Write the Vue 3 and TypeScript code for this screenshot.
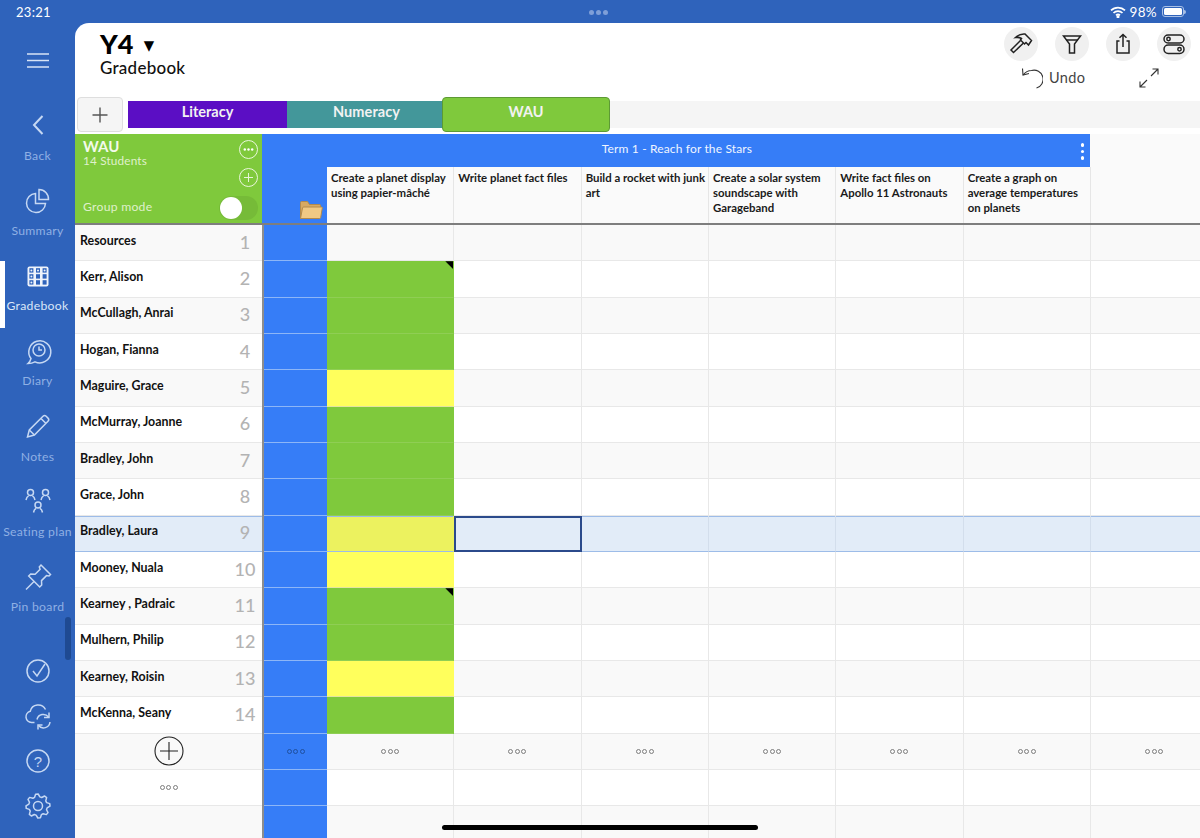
<script setup lang="ts">
type Student = { name: string; colour: '' | 'g' | 'y'; mark?: boolean }

const students: Student[] = [
  { name: 'Resources', colour: '' },
  { name: 'Kerr, Alison', colour: 'g', mark: true },
  { name: 'McCullagh, Anrai', colour: 'g' },
  { name: 'Hogan, Fianna', colour: 'g' },
  { name: 'Maguire, Grace', colour: 'y' },
  { name: 'McMurray, Joanne', colour: 'g' },
  { name: 'Bradley, John', colour: 'g' },
  { name: 'Grace, John', colour: 'g' },
  { name: 'Bradley, Laura', colour: 'y' },
  { name: 'Mooney, Nuala', colour: 'y' },
  { name: 'Kearney , Padraic', colour: 'g', mark: true },
  { name: 'Mulhern, Philip', colour: 'g' },
  { name: 'Kearney, Roisin', colour: 'y' },
  { name: 'McKenna, Seany', colour: 'g' },
]
const selectedIndex = 8
const columns = [
  'Create a planet display using papier-mâché',
  'Write planet fact files',
  'Build a rocket with junk art',
  'Create a solar system soundscape with Garageband',
  'Write fact files on Apollo 11 Astronauts',
  'Create a graph on average temperatures on planets',
]
const cellCols = [0, 1, 2, 3, 4, 5, 6]

const gearPath = (() => {
  const cx = 15, cy = 15, n = 8
  const pts: string[] = []
  for (let i = 0; i < n; i++) {
    const a = (i / n) * Math.PI * 2
    const step = (Math.PI * 2) / n
    const offs: [number, number][] = [
      [-0.5, 9.3], [-0.27, 12], [0.02, 12], [0.27, 9.3],
    ]
    for (const [o, r] of offs) {
      const t = a + o * step * 0.95
      pts.push(`${(cx + r * Math.cos(t)).toFixed(2)} ${(cy + r * Math.sin(t)).toFixed(2)}`)
    }
  }
  return 'M' + pts.join('L') + 'Z'
})()

const gridSquares: { x: number; y: number; dot: boolean }[] = []
for (let r = 0; r < 3; r++) {
  for (let c = 0; c < 3; c++) {
    gridSquares.push({ x: 6.4 + c * 6.6, y: 7.2 + r * 6, dot: r === 0 || c === 0 })
  }
}
</script>

<template>
  <div class="page">
    <div class="status">
      <span class="time">23:21</span>
      <span class="dots"><i></i><i></i><i></i></span>
      <span class="status-right">
        <svg width="16" height="12" viewBox="0 0 16 12" fill="none" stroke="#fff" stroke-width="1.7">
          <path d="M1 4.4a10 10 0 0 1 14 0" /><path d="M3.5 7a6.4 6.4 0 0 1 9 0" /><path d="M6 9.4a3 3 0 0 1 4 0" />
          <circle cx="8" cy="10.8" r=".7" fill="#fff" />
        </svg>
        <span class="pct">98%</span>
        <span class="battery"><b></b></span>
      </span>
    </div>

    <div class="shell">
      <nav class="sidebar">
        <div class="burger">
          <svg width="22" height="15" viewBox="0 0 22 15" stroke="#d8e4f6" stroke-width="1.5"><path d="M0 1h22M0 7.5h22M0 14h22" /></svg>
        </div>

        <div class="nav-item">
          <svg class="ico" viewBox="0 0 30 30"><path d="M19.5 6 11 15l8.5 9" stroke-width="2" /></svg>
          <span>Back</span>
        </div>
        <div class="nav-item">
          <svg class="ico" viewBox="0 0 30 30"><path d="M12.5 8.5a9.5 9.5 0 1 0 10 10h-10z" /><path d="M16 4.5a9.5 9.5 0 0 1 9.5 10H16z" /></svg>
          <span>Summary</span>
        </div>
        <div class="nav-item active">
          <i class="strip"></i>
          <svg class="ico" viewBox="0 0 30 30">
            <rect x="4.500" y="5.500" width="21" height="20" rx="2" fill="#eef3fb" stroke="none" />
            <g v-for="(s, i) in gridSquares" :key="i">
              <rect :x="s.x" :y="s.y" width="4" height="4.400" fill="#2f63bb" stroke="none" />
              <circle v-if="s.dot" :cx="s.x + 2" :cy="s.y + 2.2" r="1" fill="#eef3fb" stroke="none" />
            </g>
          </svg>
          <span>Gradebook</span>
        </div>
        <div class="nav-item">
          <svg class="ico" viewBox="0 0 30 30">
            <path d="M8 22.500a11 11 0 1 1 4 3.300q-3 1.700-7 1.700 2.300-2 3-5z" />
            <circle cx="16" cy="14" r="6" /><path d="M16 10.500V14h3" />
          </svg>
          <span>Diary</span>
        </div>
        <div class="nav-item">
          <svg class="ico" viewBox="0 0 30 30">
            <path d="M4.500 26l1.800-7L20 5.300a2.300 2.300 0 0 1 3.200 0l1.800 1.800a2.300 2.300 0 0 1 0 3.200L11.400 24z" />
            <path d="M6.300 19l5.100 5M18 7.500l4.800 4.800" />
          </svg>
          <span>Notes</span>
        </div>
        <div class="nav-item">
          <svg class="ico" viewBox="0 0 30 30" stroke-width="1.900">
            <g v-for="p in [[7.500, 2], [22.500, 2], [15, 14.500]]" :key="p[0]">
              <circle :cx="p[0]" :cy="p[1] + 3.500" r="3" />
              <path :d="`M${p[0] - 4.500} ${p[1] + 11}q.6-3.200 2.600-4.200M${p[0] + 4.500} ${p[1] + 11}q-.6-3.200-2.600-4.200`" />
            </g>
          </svg>
          <span>Seating plan</span>
        </div>
        <div class="nav-item">
          <svg class="ico" viewBox="0 0 30 30">
            <path d="M18 3l9.500 9.500-1.500 1.500-2.500-.4-5 5 .2 4.400-2 2-11-11 2-2 4.400.2 5-5L16.300 5z" />
            <path d="M11 19.500 3 27.500" />
          </svg>
          <span>Pin board</span>
        </div>

        <div class="nav-bottom">
          <div class="nav-btn">
            <svg class="ico" viewBox="0 0 30 30"><circle cx="15" cy="15" r="11" /><path d="M10 15l4 5 8-12" /></svg>
          </div>
          <div class="nav-btn">
            <svg class="ico" viewBox="0 0 30 30" stroke-width="1.700">
              <path d="M11.500 21.500H8.500a5.700 5.700 0 0 1-1.300-11.200A8.200 8.200 0 0 1 22.500 8.500" />
              <path d="M14 18.500a6.500 6.500 0 0 1 11.500-2.500M27 21a6.500 6.500 0 0 1-11.500 3.500" />
              <path d="M26 11.500V16.500H21M15 28.500v-4.500h4.500" />
            </svg>
          </div>
          <div class="nav-btn">
            <svg class="ico" viewBox="0 0 30 30">
              <circle cx="15" cy="15" r="11" />
              <text x="15" y="20.500" text-anchor="middle" class="q">?</text>
            </svg>
          </div>
          <div class="nav-btn">
            <svg class="ico" viewBox="0 0 30 30"><path :d="gearPath" stroke-linejoin="round" /><circle cx="15" cy="15" r="4.500" /></svg>
          </div>
        </div>
        <i class="nav-scroll"></i>
      </nav>

      <main class="main">
        <header class="top">
          <div class="title">
            <div class="class-name">Y4 <span class="caret">▼</span></div>
            <div class="page-name">Gradebook</div>
          </div>
          <div class="tools">
            <div class="tool-row">
              <span class="round">
                <svg width="24" height="24" viewBox="0 0 24 24"><path d="M6.500 5.500Q11 1.500 16 2L22.500 8.500 19.500 13 17 10.500 15.500 12 11.500 8 12.500 6.500Q10 5 6.500 5.500z" /><path d="M11.500 8.500 2 18l2.500 2.500L14.500 11" /></svg>
              </span>
              <span class="round">
                <svg width="24" height="24" viewBox="0 0 24 24"><path d="M3.500 4h17l-6 8v9h-5v-9z" /><path d="M6 8h12" /></svg>
              </span>
              <span class="round">
                <svg width="24" height="24" viewBox="0 0 24 24"><path d="M8.500 9H6v12h12V9h-2.500" /><path d="M12 15V2.500M8.500 5.800 12 2.500l3.500 3.300" /></svg>
              </span>
              <span class="round">
                <svg width="24" height="24" viewBox="0 0 24 24"><rect x="2" y="3" width="20" height="8" rx="4" /><rect x="2" y="13" width="20" height="8.500" rx="4.200" /><circle cx="6.500" cy="7" r="1.700" /><circle cx="17.500" cy="17.200" r="1.700" /></svg>
              </span>
            </div>
            <div class="tool-row2">
              <svg class="undo" width="22" height="22" viewBox="0 0 22 22"><path d="M1.500 1.500 2 8l6-1.500" /><path d="M2 8Q5.500 3.500 10.500 3.500A8.500 8.500 0 0 1 15.500 21" /></svg>
              <span class="undo-label">Undo</span>
              <svg class="expand" width="22" height="22" viewBox="0 0 22 22"><path d="M13 9l7-7M14.500 2H20v5.500M9 13l-7 7M2 14.500V20h5.500" /></svg>
            </div>
          </div>
        </header>

        <div class="tabs">
          <button class="add-tab">
            <svg width="16" height="16" viewBox="0 0 16 16" stroke="#555" stroke-width="1.400"><path d="M8 .5v15M.5 8h15" /></svg>
          </button>
          <div class="tab literacy">Literacy</div>
          <div class="tab numeracy">Numeracy</div>
          <div class="tab wau">WAU</div>
          <div class="tab-rest"></div>
        </div>

        <div class="gap"></div>

        <section class="table">
          <div class="head">
            <div class="class-panel">
              <div class="panel-top">
                <div>
                  <div class="panel-title">WAU</div>
                  <div class="panel-sub">14 Students</div>
                </div>
                <div class="panel-btns">
                  <span class="ring"><svg width="11" height="3" viewBox="0 0 11 3" fill="#fff"><circle cx="1.800" cy="1.500" r="1.200" /><circle cx="5.500" cy="1.500" r="1.200" /><circle cx="9.200" cy="1.500" r="1.200" /></svg></span>
                  <span class="ring"><svg width="9" height="9" viewBox="0 0 9 9" stroke="#e6f4d8"><path d="M4.500 0v9M0 4.500h9" /></svg></span>
                </div>
              </div>
              <div class="panel-bottom">
                <span class="group-label">Group mode</span>
                <span class="toggle"><i></i></span>
              </div>
            </div>
            <div class="term">
              <div class="term-banner">
                <span>Term 1 - Reach for the Stars</span>
                <span class="kebab"><i></i><i></i><i></i></span>
              </div>
              <div class="term-cols">
                <div class="folder-cell">
                  <svg width="24" height="20" viewBox="0 0 24 20"><path d="M1.500 18.500V2.500q0-1 1-1h6l2 3h10q1 0 1 1v2H5z" fill="#d8a962" stroke="#b28a4c" /><path d="M1.500 18.500l2-10.500q.2-1 1.200-1h17.800q1 0 .8 1l-1.600 9.500q-.2 1-1.200 1z" fill="#f0c984" stroke="#b28a4c" /></svg>
                </div>
                <div v-for="c in columns" :key="c" class="col-title">{{ c }}</div>
              </div>
            </div>
            <div class="head-rest"></div>
          </div>

          <div
            v-for="(s, i) in students"
            :key="s.name"
            class="row"
            :class="{ odd: i % 2 === 0, selected: i === selectedIndex }"
          >
            <div class="name-cell">
              <span class="name">{{ s.name }}</span>
              <span class="num">{{ i + 1 }}</span>
            </div>
            <div class="rule"></div>
            <div class="blue-cell"></div>
            <div
              v-for="c in cellCols"
              :key="c"
              class="cell"
              :class="{
                green: c === 0 && s.colour === 'g',
                yellow: c === 0 && s.colour === 'y',
                mark: c === 0 && s.mark,
                current: c === 1 && i === selectedIndex,
              }"
            ></div>
          </div>

          <div class="row">
            <div class="name-cell center odd-bg">
              <svg width="30" height="30" viewBox="0 0 30 30" fill="none" stroke="#222" stroke-width="1.100"><circle cx="15" cy="15" r="14" /><path d="M15 6v18M6 15h18" /></svg>
            </div>
            <div class="rule"></div>
            <div class="blue-cell center"><span class="ooo on-blue"><i></i><i></i><i></i></span></div>
            <div v-for="c in cellCols" :key="c" class="cell center odd-bg"><span class="ooo"><i></i><i></i><i></i></span></div>
          </div>
          <div class="row">
            <div class="name-cell center"><span class="ooo"><i></i><i></i><i></i></span></div>
            <div class="rule"></div>
            <div class="blue-cell"></div>
            <div v-for="c in cellCols" :key="c" class="cell"></div>
          </div>
          <div class="row odd">
            <div class="name-cell"></div>
            <div class="rule"></div>
            <div class="blue-cell"></div>
            <div v-for="c in cellCols" :key="c" class="cell"></div>
          </div>
        </section>
      </main>
    </div>
    <i class="home"></i>
  </div>
</template>

<style>
html, body { margin: 0; background: #2f63bb; }
</style>

<style scoped>
.page {
  position: relative;
  width: 1200px;
  height: 838px;
  overflow: hidden;
  display: flex;
  flex-direction: column;
  background: #2f63bb;
  font-family: Lato, "Open Sans", sans-serif;
  color: #111;
}
.status {
  height: 23px;
  flex: none;
  position: relative;
  display: flex;
  justify-content: space-between;
  align-items: center;
  padding: 0 16px;
  color: #fff;
  font-size: 13px;
  letter-spacing: .3px;
}
.dots { display: flex; gap: 2px; position: absolute; left: 589px; top: 10px; }
.dots i { width: 5px; height: 5px; border-radius: 50%; background: #7f9fd8; }
.status-right { display: flex; align-items: center; gap: 5px; }
.pct { font-size: 13.500px; margin-left: -1px; }
.battery { position: relative; width: 22px; height: 11px; border: 1px solid #a9c0e6; border-radius: 3px; padding: 1px; box-sizing: border-box; display: block; }
.battery b { display: block; height: 100%; background: #fff; border-radius: 1.5px; }
.battery::after { content: ""; position: absolute; right: -3px; top: 2.500px; width: 2px; height: 4px; border-radius: 0 2px 2px 0; background: #a9c0e6; }
.shell { flex: 1; display: flex; min-height: 0; }

.sidebar { position: relative; width: 75px; flex: none; display: flex; flex-direction: column; }
.burger { height: 74px; flex: none; display: flex; align-items: center; justify-content: center; }
.nav-item {
  position: relative;
  height: 75.33px;
  flex: none;
  padding-top: 13px;
  box-sizing: border-box;
  display: flex;
  flex-direction: column;
  align-items: center;
  color: #8fb0e4;
  font-size: 12.200px;
  letter-spacing: .3px;
  white-space: nowrap;
}
.nav-item span { margin-top: 7.500px; line-height: 16px; }
.nav-item.active { color: #d9e6f8; }
.strip { position: absolute; left: 0; top: 13px; width: 5px; height: 67px; background: #fff; }
.ico { width: 30px; height: 30px; flex: none; fill: none; stroke: #c6d8f3; stroke-width: 1.500; }
.q { fill: #c6d8f3; stroke: none; font-size: 15px; font-family: "Liberation Sans", sans-serif; }
.nav-bottom { margin-top: auto; padding-bottom: 10px; }
.nav-btn { height: 45px; display: flex; align-items: center; justify-content: center; }
.nav-scroll { position: absolute; left: 65px; top: 594px; width: 6px; height: 43px; background: #1f4a92; border-radius: 3px; }

.main { flex: 1; min-width: 0; background: #fff; border-top-left-radius: 14px; overflow: hidden; display: flex; flex-direction: column; }
.top { height: 78px; flex: none; display: flex; justify-content: space-between; padding: 0 9px 0 25px; }
.class-name { font-size: 27px; font-weight: 900; line-height: 32px; margin-top: 5px; color: #000; }
.caret { font-size: 13.500px; vertical-align: 4px; margin-left: 4px; font-family: "DejaVu Sans", sans-serif; }
.page-name { font-size: 17px; font-weight: 500; line-height: 20px; margin-top: -3px; letter-spacing: .25px; }
.tools { display: flex; flex-direction: column; }
.tool-row { display: flex; gap: 17px; margin-top: 4px; }
.round { width: 34px; height: 34px; border-radius: 50%; background: #f0f0f0; display: flex; align-items: center; justify-content: center; }
.round svg { fill: none; stroke: #222; stroke-width: 1.500; }
.tool-row2 { display: flex; align-items: center; margin-top: 6px; padding-left: 17px; }
.undo, .expand { fill: none; stroke: #333; stroke-width: 1.100; }
.undo-label { margin-left: 6px; margin-bottom: 2px; font-size: 14.500px; color: #444; letter-spacing: .4px; }
.expand { margin-left: 53px; }

.tabs { height: 27px; flex: none; display: flex; padding-left: 2px; }
.add-tab { width: 46px; margin: -4px 0 -4px; padding: 0; flex: none; background: #f5f5f5; border: 1px solid #dedede; border-radius: 4px; display: flex; align-items: center; justify-content: center; }
.tab { display: flex; align-items: center; justify-content: center; color: #f2f2f2; font-size: 14.500px; font-weight: 700; flex: none; box-sizing: border-box; padding-bottom: 6px; }
.literacy { width: 159px; margin-left: 5px; background: #5b0ec4; }
.numeracy { width: 155px; background: #43979a; padding-left: 4px; letter-spacing: .1px; }
.wau { width: 168px; margin: -4px 0 -4px; background: #7fc93c; border: 1px solid #5d9a34; border-radius: 4px; }
.tab-rest { flex: 1; background: #f5f5f5; }
.gap { height: 6px; flex: none; }

.table { flex: 1; min-height: 0; }
.head { height: 91px; display: flex; box-sizing: border-box; border-bottom: 2px solid #7e7e7e; background: #fafafa; }
.class-panel { width: 187px; flex: none; box-sizing: border-box; background: #7fc93c; display: flex; flex-direction: column; padding: 6px 4px 3px 8px; color: #dff0cb; }
.panel-top { display: flex; justify-content: space-between; }
.panel-title { font-size: 15px; font-weight: 700; color: #f3faea; line-height: 16px; margin-top: -2px; }
.panel-sub { font-size: 11.800px; line-height: 15px; letter-spacing: .15px; margin-top: -1px; }
.panel-btns { display: flex; flex-direction: column; gap: 9px; }
.ring { width: 19px; height: 19px; box-sizing: border-box; border: 1px solid #eaf6dc; border-radius: 50%; display: flex; align-items: center; justify-content: center; }
.panel-bottom { margin-top: auto; display: flex; justify-content: space-between; align-items: center; font-size: 12.200px; letter-spacing: .25px; }
.group-label { margin-bottom: 3px; }
.toggle { width: 39px; height: 24px; border-radius: 12px; background: #76bb38; display: block; }
.toggle i { display: block; width: 22px; height: 22px; margin: 1px; border-radius: 50%; background: #fff; }
.term { width: 828px; flex: none; display: flex; flex-direction: column; border-left: 2px solid #367df7; box-sizing: border-box; }
.term-banner { height: 33px; flex: none; position: relative; background: #367df7; color: #f0f5ff; font-size: 12px; font-weight: 400; letter-spacing: .15px; display: flex; align-items: center; justify-content: center; padding-bottom: 5px; box-sizing: border-box; }
.kebab { position: absolute; right: 6px; top: 9px; display: flex; flex-direction: column; gap: 3px; }
.kebab i { width: 3.500px; height: 3.500px; border-radius: 50%; background: #fff; }
.term-cols { flex: 1; display: grid; grid-template-columns: 63px repeat(6, 127.33px); min-height: 0; }
.folder-cell { background: #367df7; display: flex; justify-content: flex-end; align-items: flex-end; padding: 0 4px 3px 0; }
.col-title { font-size: 11.400px; line-height: 15px; font-weight: 700; padding: 3px 2px 0 4px; border-right: 1px solid #e6e6e6; color: #1a1a1a; overflow: hidden; }
.head-rest { flex: 1; }

.row { height: 36.33px; box-sizing: border-box; display: grid; grid-template-columns: 187px 2px 63px repeat(7, 127.33px); background: #fff; }
.row.odd { background: #f9f9f9; }
.name-cell { display: flex; align-items: center; justify-content: space-between; padding: 0 5px 0 5px; border-bottom: 1px solid #e8e8e8; box-sizing: border-box; min-width: 0; }
.name { font-size: 12.400px; font-weight: 700; margin-top: -5px; color: #111; }
.num { width: 24px; text-align: center; font-size: 18px; color: #b3b3b3; font-weight: 500; margin-top: -2px; }
.rule { background: #8d8d8d; }
.blue-cell { background: #367df7; border-bottom: 1px solid #8db6f7; box-sizing: border-box; }
.cell { position: relative; box-sizing: border-box; border-right: 1px solid #e8e8e8; border-bottom: 1px solid #e8e8e8; }
.cell.green { background: #7fc93c; border-right-color: #7fc93c; border-bottom-color: #8fce54; }
.cell.yellow { background: #ffff5c; border-right-color: #ffff5c; border-bottom-color: #e4e4a0; }
.cell.mark::after { content: ""; position: absolute; top: 0; right: 0; width: 8px; height: 8px; background: #000; clip-path: polygon(0 0, 100% 0, 100% 100%); }
.center { display: flex; align-items: center; justify-content: center; padding: 0; }
.odd-bg { background: #f9f9f9; }
.ooo { display: flex; gap: 1.500px; }
.ooo i { width: 5px; height: 5px; box-sizing: border-box; border: 1px solid #7d7d7d; border-radius: 50%; }
.ooo.on-blue i { border-color: #1f4f9e; }

.row.selected { background: #e2ecf8; }
.row.selected .name-cell,
.row.selected .cell { border-bottom-color: #9dbce8; box-shadow: inset 0 1px 0 #9dbce8; }
.row.selected .cell { border-right-color: #d3deec; }
.row.selected .cell.yellow { background: #ecf25f; border-right-color: #ecf25f; }
.row.selected .cell.current { border: 2px solid #2b4a8b; box-shadow: none; }

.home { position: absolute; left: 442px; top: 825px; width: 316px; height: 5px; border-radius: 3px; background: #000; }
</style>
